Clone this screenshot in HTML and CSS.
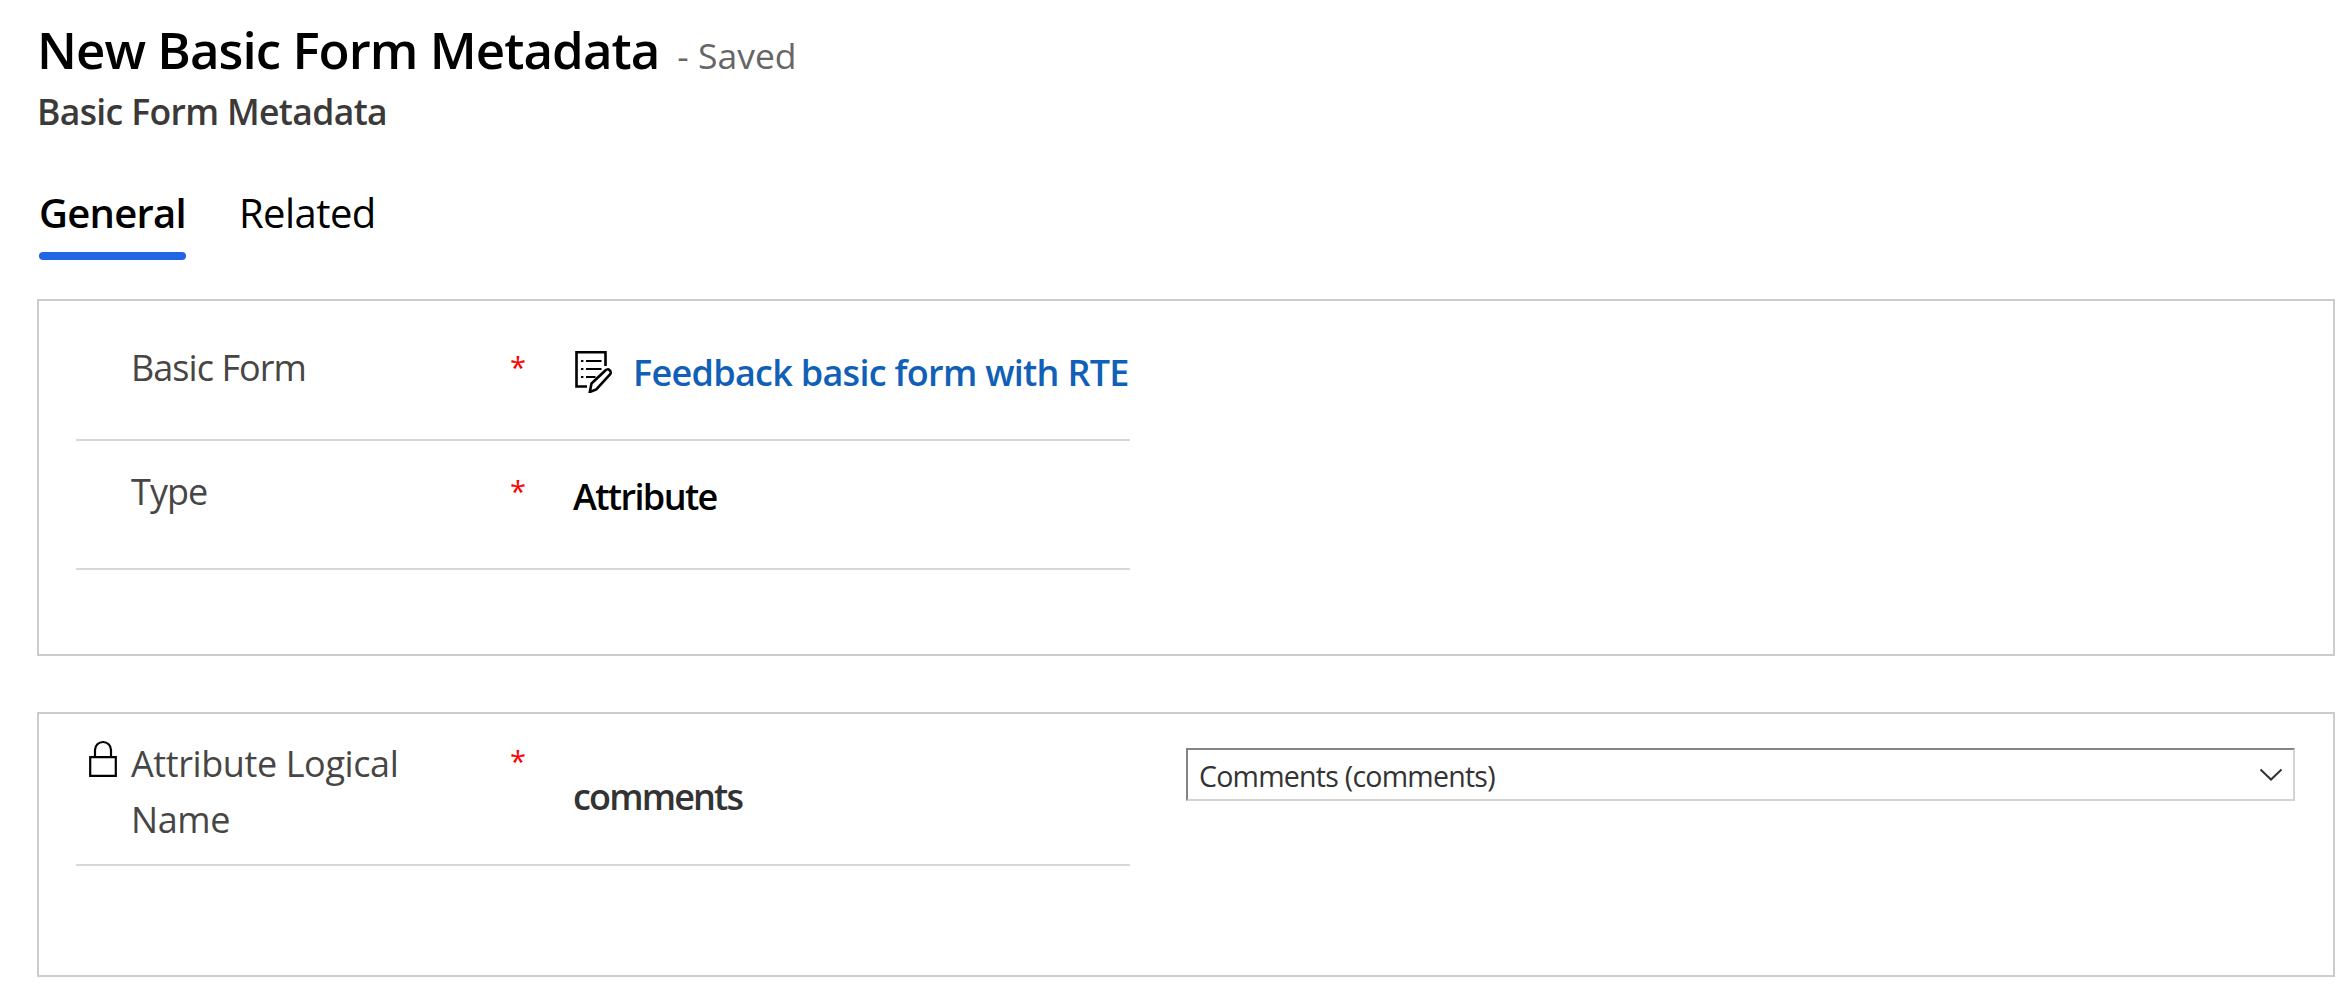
FILE: index.html
```html
<!DOCTYPE html>
<html lang="en">
<head>
<meta charset="utf-8">
<title>New Basic Form Metadata</title>
<link rel="stylesheet" href="styles.css">
</head>
<body>
<header class="record-header">
  <div class="title-row">
    <h1 class="title">New Basic Form Metadata</h1>
    <span class="status">- Saved</span>
  </div>
  <div class="entity">Basic Form Metadata</div>
</header>
<nav class="tabs">
  <a class="tab tab-active">General</a>
  <a class="tab">Related</a>
</nav>
<main class="sections">
  <section class="panel panel-form">
    <div class="fields">
      <div class="field field-form">
        <label class="label">Basic Form</label>
        <span class="required">*</span>
        <a class="value lookup">
          <svg class="form-icon" viewBox="0 0 38 44" fill="none" stroke="#000" stroke-width="2.6">
            <path d="M12 37.500H1.500V3.300H30.500V17"/>
            <path d="M6 12h2.400M11 12h15.500M6 20h2.400M11 20h15.500M6 28h2.400M11 28h9.500" stroke-width="2.200"/>
            <path d="M14.800 43l1.700-8.500L30.300 21.500a2.950 2.950 0 0 1 4.700 4L21.300 40.500z" stroke-width="2.600"/>
          </svg>
          <span>Feedback basic form with RTE</span>
        </a>
      </div>
      <div class="field field-type">
        <label class="label">Type</label>
        <span class="required">*</span>
        <span class="value value-type">Attribute</span>
      </div>
    </div>
  </section>
  <section class="panel panel-attribute">
    <div class="fields">
      <div class="field field-attribute">
        <svg class="lock-icon" viewBox="0 0 28 38" fill="none" stroke="#000" stroke-width="2.200">
          <path d="M1.200 17.200h25.600v18.600H1.200zM6 17V10a8 8 0 0 1 16 0v7"/>
        </svg>
        <label class="label">Attribute Logical Name</label>
        <span class="required">*</span>
        <span class="value value-locked">comments</span>
      </div>
    </div>
    <div class="select">
      <span class="select-text">Comments (comments)</span>
      <svg class="chevron" viewBox="0 0 24 14" fill="none" stroke="#333" stroke-width="2"><path d="M1.500 1.500L12 11.500L22.500 1.500"/></svg>
    </div>
  </section>
</main>
</body>
</html>
```
FILE: styles.css
```css
* { box-sizing: border-box; }

body {
  margin: 0;
  padding: 15px 17px 0 37px;
  background: #fff;
  color: #000;
  font-family: "Open Sans", "Noto Sans", sans-serif;
}

.record-header { display: flex; flex-direction: column; gap: 4px; }
.title-row { display: flex; align-items: baseline; gap: 18px; }
.title { margin: 0; font-size: 51px; font-weight: 600; letter-spacing: -0.96px; line-height: 68px; }
.status { color: #666; font-size: 35.5px; line-height: 48px; }
.entity { color: #3b3a39; font-size: 35.5px; font-weight: 600; letter-spacing: -0.64px; line-height: 48px; }

.tabs { display: flex; gap: 53px; padding: 50px 0 0 2px; }
.tab { height: 75px; font-size: 40px; letter-spacing: -0.55px; line-height: 56px; }
.tab-active { font-weight: 600; letter-spacing: -0.75px; }
.tab-active::after { content: ""; display: block; height: 8px; margin-top: 11px; border-radius: 4px; background: #2266e3; }

.sections { display: flex; flex-direction: column; gap: 56px; margin-top: 39px; }
.panel { display: flex; gap: 56px; padding: 0 38px 0 37px; border: 2px solid #ccc; }
.panel-form { height: 357px; }
.panel-attribute { height: 265px; }
.fields { width: 1054px; }

.field {
  display: grid;
  grid-template-columns: 55px 379px 63px 1fr;
  border-bottom: 2px solid #d8d8d8;
  font-size: 36px;
}
.field-form { height: 140px; padding-top: 43px; }
.field-type { height: 129px; padding-top: 27px; }
.field-attribute { height: 152px; padding-top: 24px; }
.label { grid-column: 2; color: #484644; letter-spacing: -0.95px; line-height: 48px; }
.field-attribute .label { width: 300px; margin-top: -2px; letter-spacing: -0.4px; line-height: 55.5px; }
.required { grid-column: 3; color: #f00; font-size: 29px; line-height: 46px; }
.value { grid-column: 4; margin-top: 5px; font-weight: 600; line-height: 48px; white-space: nowrap; }
.value-type { letter-spacing: -1.6px; }
.value-locked { margin-top: 35px; color: #333; letter-spacing: -1.85px; }
.lookup { display: flex; gap: 19px; color: #1160b7; letter-spacing: -0.72px; }
.form-icon { width: 38px; height: 44px; margin-left: 2px; margin-right: 1px; }
.lock-icon { grid-column: 1; width: 28px; height: 38px; margin: 2px 0 0 13px; }

.select {
  display: flex;
  flex: 1;
  align-items: center;
  justify-content: space-between;
  height: 53px;
  margin-top: 34px;
  padding: 0 10px 0 11px;
  border: 2px solid;
  border-color: #848484 #d6d2cd #d6d2cd #848484;
  color: #333;
  font-size: 28.5px;
}
.select-text { padding-top: 2px; letter-spacing: -0.75px; }
.chevron { width: 24px; height: 14px; }
```
